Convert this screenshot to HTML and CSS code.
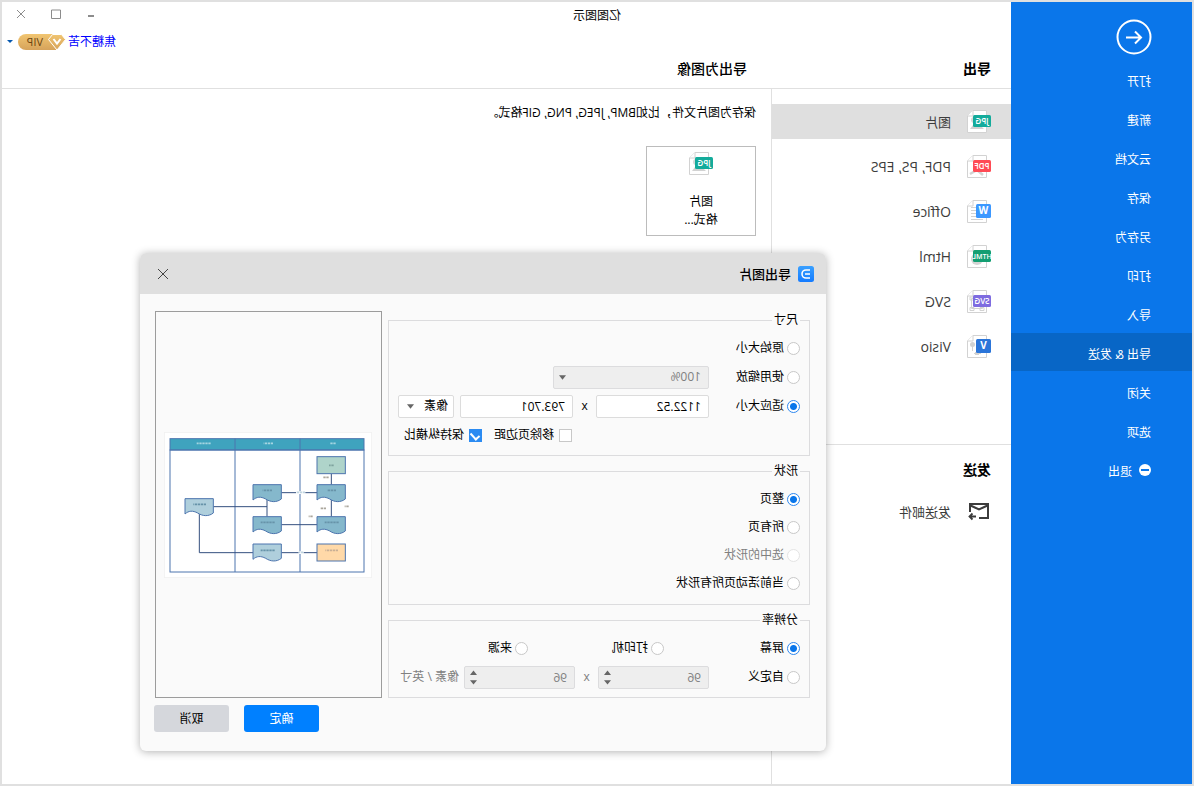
FILE: index.html
```html
<!DOCTYPE html>
<html lang="zh-CN">
<head>
<meta charset="utf-8">
<title>亿图图示</title>
<link rel="stylesheet" href="styles.css">
</head>
<body>
<svg class="defs" aria-hidden="true">
  <defs>
    <symbol id="page" viewBox="0 0 24 24"><path d="M4.500 .5H18L23.500 6V22.500H4.500Z" fill="#fff" stroke="#d2d2d2"/><path d="M18 .5V6H23.500" fill="#fff" stroke="#d2d2d2"/></symbol>
    <symbol id="jpg" viewBox="0 0 24 24"><use href="#page"/><circle cx="17" cy="10" r="3" fill="#d8d8d8"/><path d="M7 19L12 14L16 17L18 15L21 19Z" fill="#d2d2d2"/><rect y="5" width="18" height="12" rx="1.500" fill="#14ab9b"/><text x="9" y="14" text-anchor="middle" class="badge-text">JPG</text></symbol>
    <linearGradient id="gold" x2="0" y2="1"><stop stop-color="#f1c571"/><stop offset="1" stop-color="#d6a35b"/></linearGradient>
    <linearGradient id="blue" x2="0" y2="1"><stop stop-color="#3aa0ff"/><stop offset="1" stop-color="#147bff"/></linearGradient>
    <path id="doc" d="M0 0H85V46C74 36 62 35 47 43C32 53 14 54 0 43Z" stroke="#4d75ae" stroke-width="3"/>
  </defs>
</svg>
<div class="window">
  <aside class="sidebar">
    <button class="back" aria-label="返回"><svg viewBox="0 0 36 36"><circle cx="18" cy="18" r="16.500"/><path d="M26 18.500H11M17 12.500L11 18.500L17 24.500"/></svg></button>
    <button class="menu-item">打开</button>
    <button class="menu-item">新建</button>
    <button class="menu-item">云文档</button>
    <button class="menu-item">保存</button>
    <button class="menu-item">另存为</button>
    <button class="menu-item">打印</button>
    <button class="menu-item">导入</button>
    <button class="menu-item current">导出 &amp; 发送</button>
    <button class="menu-item">关闭</button>
    <button class="menu-item">选项</button>
    <button class="menu-item"><svg class="exit" viewBox="0 0 12 12"><circle cx="6" cy="6" r="6" fill="#fff"/><path d="M2 6H10" stroke="#0a76ea" stroke-width="2"/></svg>退出</button>
  </aside>
  <main class="main">
    <header class="header">
      <div class="titlebar">
        <h1>亿图图示</h1>
        <button aria-label="最小化"><svg viewBox="0 0 10 10"><path d="M2 7H8" stroke-width="2"/></svg></button>
        <button aria-label="最大化"><svg viewBox="0 0 10 10"><path d="M.5 1H9.500V9.500H.5Z"/></svg></button>
        <button aria-label="关闭窗口"><svg viewBox="0 0 10 10"><path d="M1 1L9 9M9 1L1 9"/></svg></button>
      </div>
      <div class="userbar">
        <a href="#user">焦糖不苦</a>
        <svg class="vip" viewBox="0 0 48 16"><path d="M10 0H40A8 8 0 0 1 40 16H10Z" fill="url(#gold)"/><path d="M4.500 .5H13.500L17.500 5.500L9 16L.5 5.500Z" fill="url(#gold)" stroke="#fff"/><path d="M5.500 5L9 9.500L12.500 5" fill="none" stroke="#fff" stroke-width="2"/><text x="23" y="12">VIP</text></svg>
        <button class="user-menu" aria-label="用户菜单"><svg viewBox="0 0 6 4"><path d="M0 0H6L3 3Z"/></svg></button>
      </div>
      <div class="headings"><h2>导出</h2><h2>导出为图像</h2></div>
    </header>
    <div class="body">
      <nav class="nav">
        <div class="formats">
          <button class="nav-item current"><svg><use href="#jpg"/></svg>图片</button>
          <button class="nav-item"><svg viewBox="0 0 24 24"><use href="#page"/><path d="M8 20L14 15L21 19" fill="none" stroke="#d2d2d2" stroke-width="2.500"/><rect y="5" width="18" height="12" rx="1.500" fill="#ff4b55"/><text x="9" y="14" text-anchor="middle" class="badge-text">PDF</text></svg><span>PDF, PS, EPS</span></button>
          <button class="nav-item"><svg viewBox="0 0 24 24"><use href="#page"/><path d="M8 7.500H20M8 10.500H20M8 13.500H20M8 16.500H20M8 19.500H20" stroke="#d2d2d2"/><rect y="4" width="15" height="14" rx="1.500" fill="#3c98ff"/><text x="7.500" y="14" text-anchor="middle" class="badge-letter">W</text></svg><span>Office</span></button>
          <button class="nav-item"><svg viewBox="0 0 24 24"><use href="#page"/><circle cx="14" cy="14" r="6" fill="#d4d4d4"/><rect y="5" width="18" height="12" rx="1.500" fill="#139e72"/><text x="9" y="14" text-anchor="middle" class="badge-text html">HTML</text></svg><span>Html</span></button>
          <button class="nav-item"><svg viewBox="0 0 24 24"><use href="#page"/><path d="M8.500 8.500H19.500V18.500H8.500ZM7 17.500H11V20.500H7ZM17 17.500H21V20.500H17ZM17 7H21V10H17Z" fill="#fff" stroke="#d2d2d2"/><rect y="5" width="18" height="12" rx="1.500" fill="#7e6ce0"/><text x="9" y="14" text-anchor="middle" class="badge-text">SVG</text></svg><span>SVG</span></button>
          <button class="nav-item"><svg viewBox="0 0 24 24"><use href="#page"/><path d="M18.500 9V16M10 18.500H17" stroke="#d2d2d2"/><circle cx="18.500" cy="9.500" r="2.500" fill="#d2d2d2"/><path d="M12 17H16V20H12Z" fill="#d2d2d2"/><rect y="4" width="15" height="14" rx="1.500" fill="#2b75d9"/><text x="7.500" y="14" text-anchor="middle" class="badge-letter">V</text></svg><span>Visio</span></button>
        </div>
        <div class="send">
          <h2>发送</h2>
          <button class="nav-item"><svg viewBox="0 0 24 24"><path d="M3 15V4H21V12M3 15V18H12M3.500 5.500L12 9.500L20.500 5.500" fill="none" stroke="#3c3c3c" stroke-width="2"/><path d="M21 16.500H15M18.500 13.500L21.500 16.500L18.500 19.500" fill="none" stroke="#3c3c3c" stroke-width="1.800"/></svg>发送邮件</button>
        </div>
      </nav>
      <section class="content">
        <p>保存为图片文件，比如BMP, JPEG, PNG, GIF格式。</p>
        <button class="card"><svg><use href="#jpg"/></svg><span>图片</span><span>格式...</span></button>
      </section>
    </div>
  </main>

  <div class="dialog" role="dialog" aria-labelledby="dialog-title">
    <div class="dialog-head">
      <svg class="logo" viewBox="0 0 16 16"><rect width="16" height="16" rx="2.500" fill="url(#blue)"/><path d="M4 4H8A4 4 0 0 1 8 12H4M4 8H9" fill="none" stroke="#fff" stroke-width="1.600"/></svg>
      <h2 id="dialog-title">导出图片</h2>
      <button aria-label="关闭"><svg viewBox="0 0 12 12"><path d="M1 1L11 11M11 1L1 11"/></svg></button>
    </div>
    <form class="dialog-body">
      <div class="groups">
        <fieldset>
          <legend>尺寸</legend>
          <div class="row"><label><input type="radio" name="size">原始大小</label></div>
          <div class="row">
            <label><input type="radio" name="size">使用缩放</label>
            <span class="select zoom"><select disabled aria-label="缩放比例"><option>100%</option></select><svg viewBox="0 0 8 5"><path d="M0 0H8L4 5Z"/></svg></span>
          </div>
          <div class="row">
            <label><input type="radio" name="size" checked>适应大小</label>
            <input class="field" type="text" value="1122.52" aria-label="宽度"><span class="times">x</span><input class="field" type="text" value="793.701" aria-label="高度">
            <span class="select unit"><select aria-label="单位"><option>像素</option></select><svg viewBox="0 0 8 5"><path d="M0 0H8L4 5Z"/></svg></span>
          </div>
          <div class="row checks">
            <label><input type="checkbox">移除页边距</label>
            <label><input type="checkbox" checked>保持纵横比</label>
          </div>
        </fieldset>
        <fieldset class="shape">
          <legend>形状</legend>
          <div class="row"><label><input type="radio" name="shape" checked>整页</label></div>
          <div class="row"><label><input type="radio" name="shape">所有页</label></div>
          <div class="row"><label class="off"><input type="radio" name="shape" disabled>选中的形状</label></div>
          <div class="row"><label><input type="radio" name="shape">当前活动页所有形状</label></div>
        </fieldset>
        <fieldset>
          <legend>分辨率</legend>
          <div class="row sources">
            <label><input type="radio" name="dpi" checked>屏幕</label>
            <label><input type="radio" name="dpi">打印机</label>
            <label><input type="radio" name="dpi">来源</label>
          </div>
          <div class="row">
            <label><input type="radio" name="dpi">自定义</label>
            <span class="spin"><input type="number" value="96" disabled aria-label="水平分辨率"><svg viewBox="0 0 8 16"><path d="M0 5L4 0L8 5ZM0 11H8L4 16Z"/></svg></span><span class="times off">x</span><span class="spin"><input type="number" value="96" disabled aria-label="垂直分辨率"><svg viewBox="0 0 8 16"><path d="M0 5L4 0L8 5ZM0 11H8L4 16Z"/></svg></span>
            <span class="per off">像素 / 英寸</span>
          </div>
        </fieldset>
      </div>
      <div class="side">
        <div class="preview">
          <svg viewBox="0 0 624 438" role="img" aria-label="预览">
            <rect x="1" y="1" width="622" height="436" fill="#fff" stroke="#f1f1f1" stroke-width="3"/>
            <g fill="none" stroke="#4d75ae" stroke-width="3">
              <rect x="24" y="20" width="582" height="34" fill="#3fa3be"/>
              <rect x="24" y="54" width="582" height="366"/>
              <path d="M216 20V420M411 20V420"/>
            </g>
            <path d="M122 125V158M122 203V254M165 182H272M165 278H272M165 362H272M357 362H518V245M315 203V254M315 224H476" fill="none" stroke="#35507f" stroke-width="3"/>
            <rect x="80" y="74" width="85" height="51" fill="#afd4ca" stroke="#4d75ae" stroke-width="3"/>
            <rect x="80" y="336" width="85" height="51" fill="#ffd9a8" stroke="#4d75ae" stroke-width="3"/>
            <use href="#doc" x="80" y="158" fill="#85b8cc"/><use href="#doc" x="272" y="158" fill="#85b8cc"/>
            <use href="#doc" x="80" y="254" fill="#85b8cc"/><use href="#doc" x="272" y="254" fill="#85b8cc"/>
            <use href="#doc" x="476" y="200" fill="#afcfdc"/><use href="#doc" x="272" y="336" fill="#afcfdc"/>
            <path d="M200 182H228M205 362H220" stroke="#fff" stroke-width="8"/>
            <g fill="none" stroke-width="5" stroke-dasharray="7 2">
              <path d="M109 34H125M297 34H325M484 34H526" stroke="#a5d5e1"/>
              <path d="M108 175H134M300 175H328M498 217H536M100 271H142M292 271H334M292 355H334" stroke="#6793a9"/>
              <path d="M115 100H129" stroke="#7fa39e"/><path d="M102 355H140" stroke="#c9b095"/>
              <path d="M130 136H146M138 229H154M70 223H82M178 253H190" stroke="#aaa69c"/>
              <path d="M201 181H227M206 361H220" stroke="#bfd4df"/>
            </g>
          </svg>
        </div>
        <div class="actions"><button type="button" class="ok">确定</button><button type="button">取消</button></div>
      </div>
    </form>
  </div>
</div>
</body>
</html>
```
FILE: styles.css
```css
* { box-sizing: border-box; }
body { margin: 0; font: 12px/16px "Open Sans", "Noto Sans CJK SC", sans-serif; color: #000; }
button, input, select { font: inherit; color: inherit; margin: 0; }
button { border: 0; padding: 0; background: none; }
h1, h2, p { margin: 0; font-size: 12px; font-weight: 400; }
.defs { position: absolute; width: 0; height: 0; }

/* The whole window is shown flipped left to right. */
.window { position: relative; display: flex; min-height: 100vh; border: 2px solid #e0e0e0; background: #fff; transform: scaleX(-1); overflow: hidden; }

.sidebar { flex: none; width: 181px; background: #0a76ea; color: #fff; }
.back { display: block; width: 36px; height: 36px; margin: 17px 0 5px 40px; }
.back svg { display: block; fill: none; stroke: #fff; stroke-width: 2; }
.menu-item { display: flex; align-items: center; gap: 7px; width: 100%; height: 38px; margin-bottom: 1px; padding: 6px 0 0 41px; }
.menu-item.current { background: #0866c6; }
.exit { width: 12px; height: 12px; margin-bottom: 4px; }

.main { flex: 1; display: flex; flex-direction: column; }
.header { border-bottom: 1px solid #e0e0e0; }
.titlebar { display: flex; align-items: center; height: 26px; padding-right: 2px; }
.titlebar h1 { flex: 1; padding: 2px 74px 0 0; text-align: center; }
.titlebar button { width: 35px; height: 24px; }
.titlebar svg { width: 10px; height: 10px; fill: none; stroke: #8c8c8c; }
.userbar { display: flex; align-items: center; justify-content: flex-end; gap: 2px; height: 26px; padding: 1px 5px 0 0; }
.userbar a { color: #00f; text-decoration: none; }
.vip { width: 48px; height: 16px; }
.vip text { font-size: 11px; fill: #6b4410; }
.user-menu { display: flex; padding-left: 3px; }
.user-menu svg { width: 6px; height: 4px; fill: #0558b0; }
.headings { display: flex; align-items: center; height: 34px; padding: 0 0 4px 20px; }
.headings h2, .send h2 { font-size: 14px; font-weight: 600; }
.headings h2:first-child { width: 244px; }
.headings h2:last-child { font-weight: 500; }

.body { flex: 1; display: flex; }
.nav { width: 240px; border-right: 1px solid #e0e0e0; }
.formats { display: flex; flex-direction: column; gap: 10px; height: 356px; padding-top: 15px; border-bottom: 1px solid #e0e0e0; }
.nav-item { display: flex; align-items: center; gap: 16px; width: 100%; height: 35px; padding-left: 20px; font-size: 13px; color: #3c3c3c; }
.nav-item span { font-size: 14px; }
.nav-item.current { background: #dfdfdf; }
.nav-item svg, .card svg { width: 24px; height: 24px; }
.badge-text { font: 600 8px "Open Sans", sans-serif; fill: #fff; }
.badge-text.html { font-size: 7px; }
.badge-letter { font: 700 10px "Open Sans", sans-serif; fill: #fff; }
.send { padding-top: 16px; }
.send h2 { padding: 1px 0 16px 20px; }

.content { flex: 1; padding: 16px; padding-left: 15px; }
.card { display: flex; flex-direction: column; align-items: center; width: 110px; height: 90px; margin-top: 25px; padding-top: 5px; border: 1px solid #bcbcbc; }
.card svg { margin-bottom: 17px; }
.card span { line-height: 18px; }

.dialog { position: absolute; left: 366px; top: 251px; width: 686px; border-radius: 6px; background: #fafafa; box-shadow: 0 1px 8px rgba(0, 0, 0, .3); overflow: hidden; }
.dialog-head { display: flex; align-items: center; gap: 7px; height: 41px; padding: 0 17px 0 12px; background: #dfdfdf; }
.dialog-head h2 { flex: 1; font-size: 13px; font-weight: 500; }
.logo { width: 16px; height: 16px; }
.dialog-head button { width: 12px; height: 12px; }
.dialog-head button svg { display: block; fill: none; stroke: #444; }
.dialog-body { display: flex; gap: 6px; padding: 17px 14px 19px 16px; }
.groups { display: flex; flex-direction: column; gap: 7px; width: 422px; }
fieldset { min-width: 0; margin: 0; padding: 6px 9px; border: 1px solid #dcdcde; margin-top: 1px; }
fieldset + fieldset { margin-top: 0; }
.shape { padding-bottom: 7px; }
legend { padding: 0 2px; line-height: 16px; }
.row { display: flex; align-items: center; height: 28px; }
.row + .row { margin-top: 1px; }
.shape .row + .row { margin-top: 0; }
label { display: flex; align-items: center; gap: 3px; }
.row > label:first-child { min-width: 91px; }
.off { color: #808080; }

input[type="radio"], input[type="checkbox"] { appearance: none; flex: none; width: 13px; height: 13px; border: 1px solid #c8c8c8; background: #fff; }
input[type="radio"] { border-radius: 50%; }
input[type="radio"]:checked { border-color: #2b87f0; background: radial-gradient(circle, #0a76ea 3px, #fff 4px); }
input[type="radio"]:disabled { border-color: #e4e4e4; }
input[type="checkbox"]:checked { border-color: #2b8bf2; background: #2b8bf2; position: relative; }
input[type="checkbox"]:checked::after { content: ""; position: absolute; left: 3px; top: 1px; width: 4px; height: 7px; border: solid #fff; border-width: 0 2px 2px 0; transform: rotate(42deg); }

.field, select, .spin input { height: 23px; padding: 0 7px; border: 1px solid #dcdcdc; border-radius: 2px; background: #fff; }
.field { width: 113px; }
.times { width: 23px; text-align: center; }
.select, .spin { position: relative; display: flex; }
select { appearance: none; width: 100%; padding: 0 5px; }
.select svg { position: absolute; right: 9px; top: 9px; width: 7px; height: 5px; fill: #666; }
.zoom { width: 156px; }
.zoom select { padding-left: 7px; }
.zoom svg { right: 6px; }
.unit { width: 56px; margin-left: 6px; }
select:disabled, .spin input:disabled { background: #eee; color: #808080; opacity: 1; border-color: #dcdcde; }
.checks { gap: 12px; padding-left: 228px; }
.checks label { gap: 5px; }
.checks > label:first-child { min-width: 0; }
.sources > label { min-width: 136px; }
.sources > label:first-child { min-width: 136px; }
.sources > label:last-child { min-width: 0; }
.spin input { width: 111px; appearance: textfield; }
.spin input::-webkit-inner-spin-button { display: none; }
.spin svg { position: absolute; right: 6px; top: 4px; width: 7px; height: 15px; fill: #666; }
.per { margin-left: 5px; white-space: nowrap; }

.side { flex: 1; display: flex; flex-direction: column; gap: 7px; }
.preview { flex: 1; display: flex; align-items: center; justify-content: center; min-height: 387px; margin-right: 1px; border: 1px solid #9c9c9c; }
.preview svg { width: 208px; height: 146px; }
.actions { display: flex; justify-content: flex-end; gap: 15px; }
.actions button { width: 75px; height: 27px; border-radius: 3px; background: #d5d7dc; }
.actions .ok { background: #0080ff; color: #fff; }
```
